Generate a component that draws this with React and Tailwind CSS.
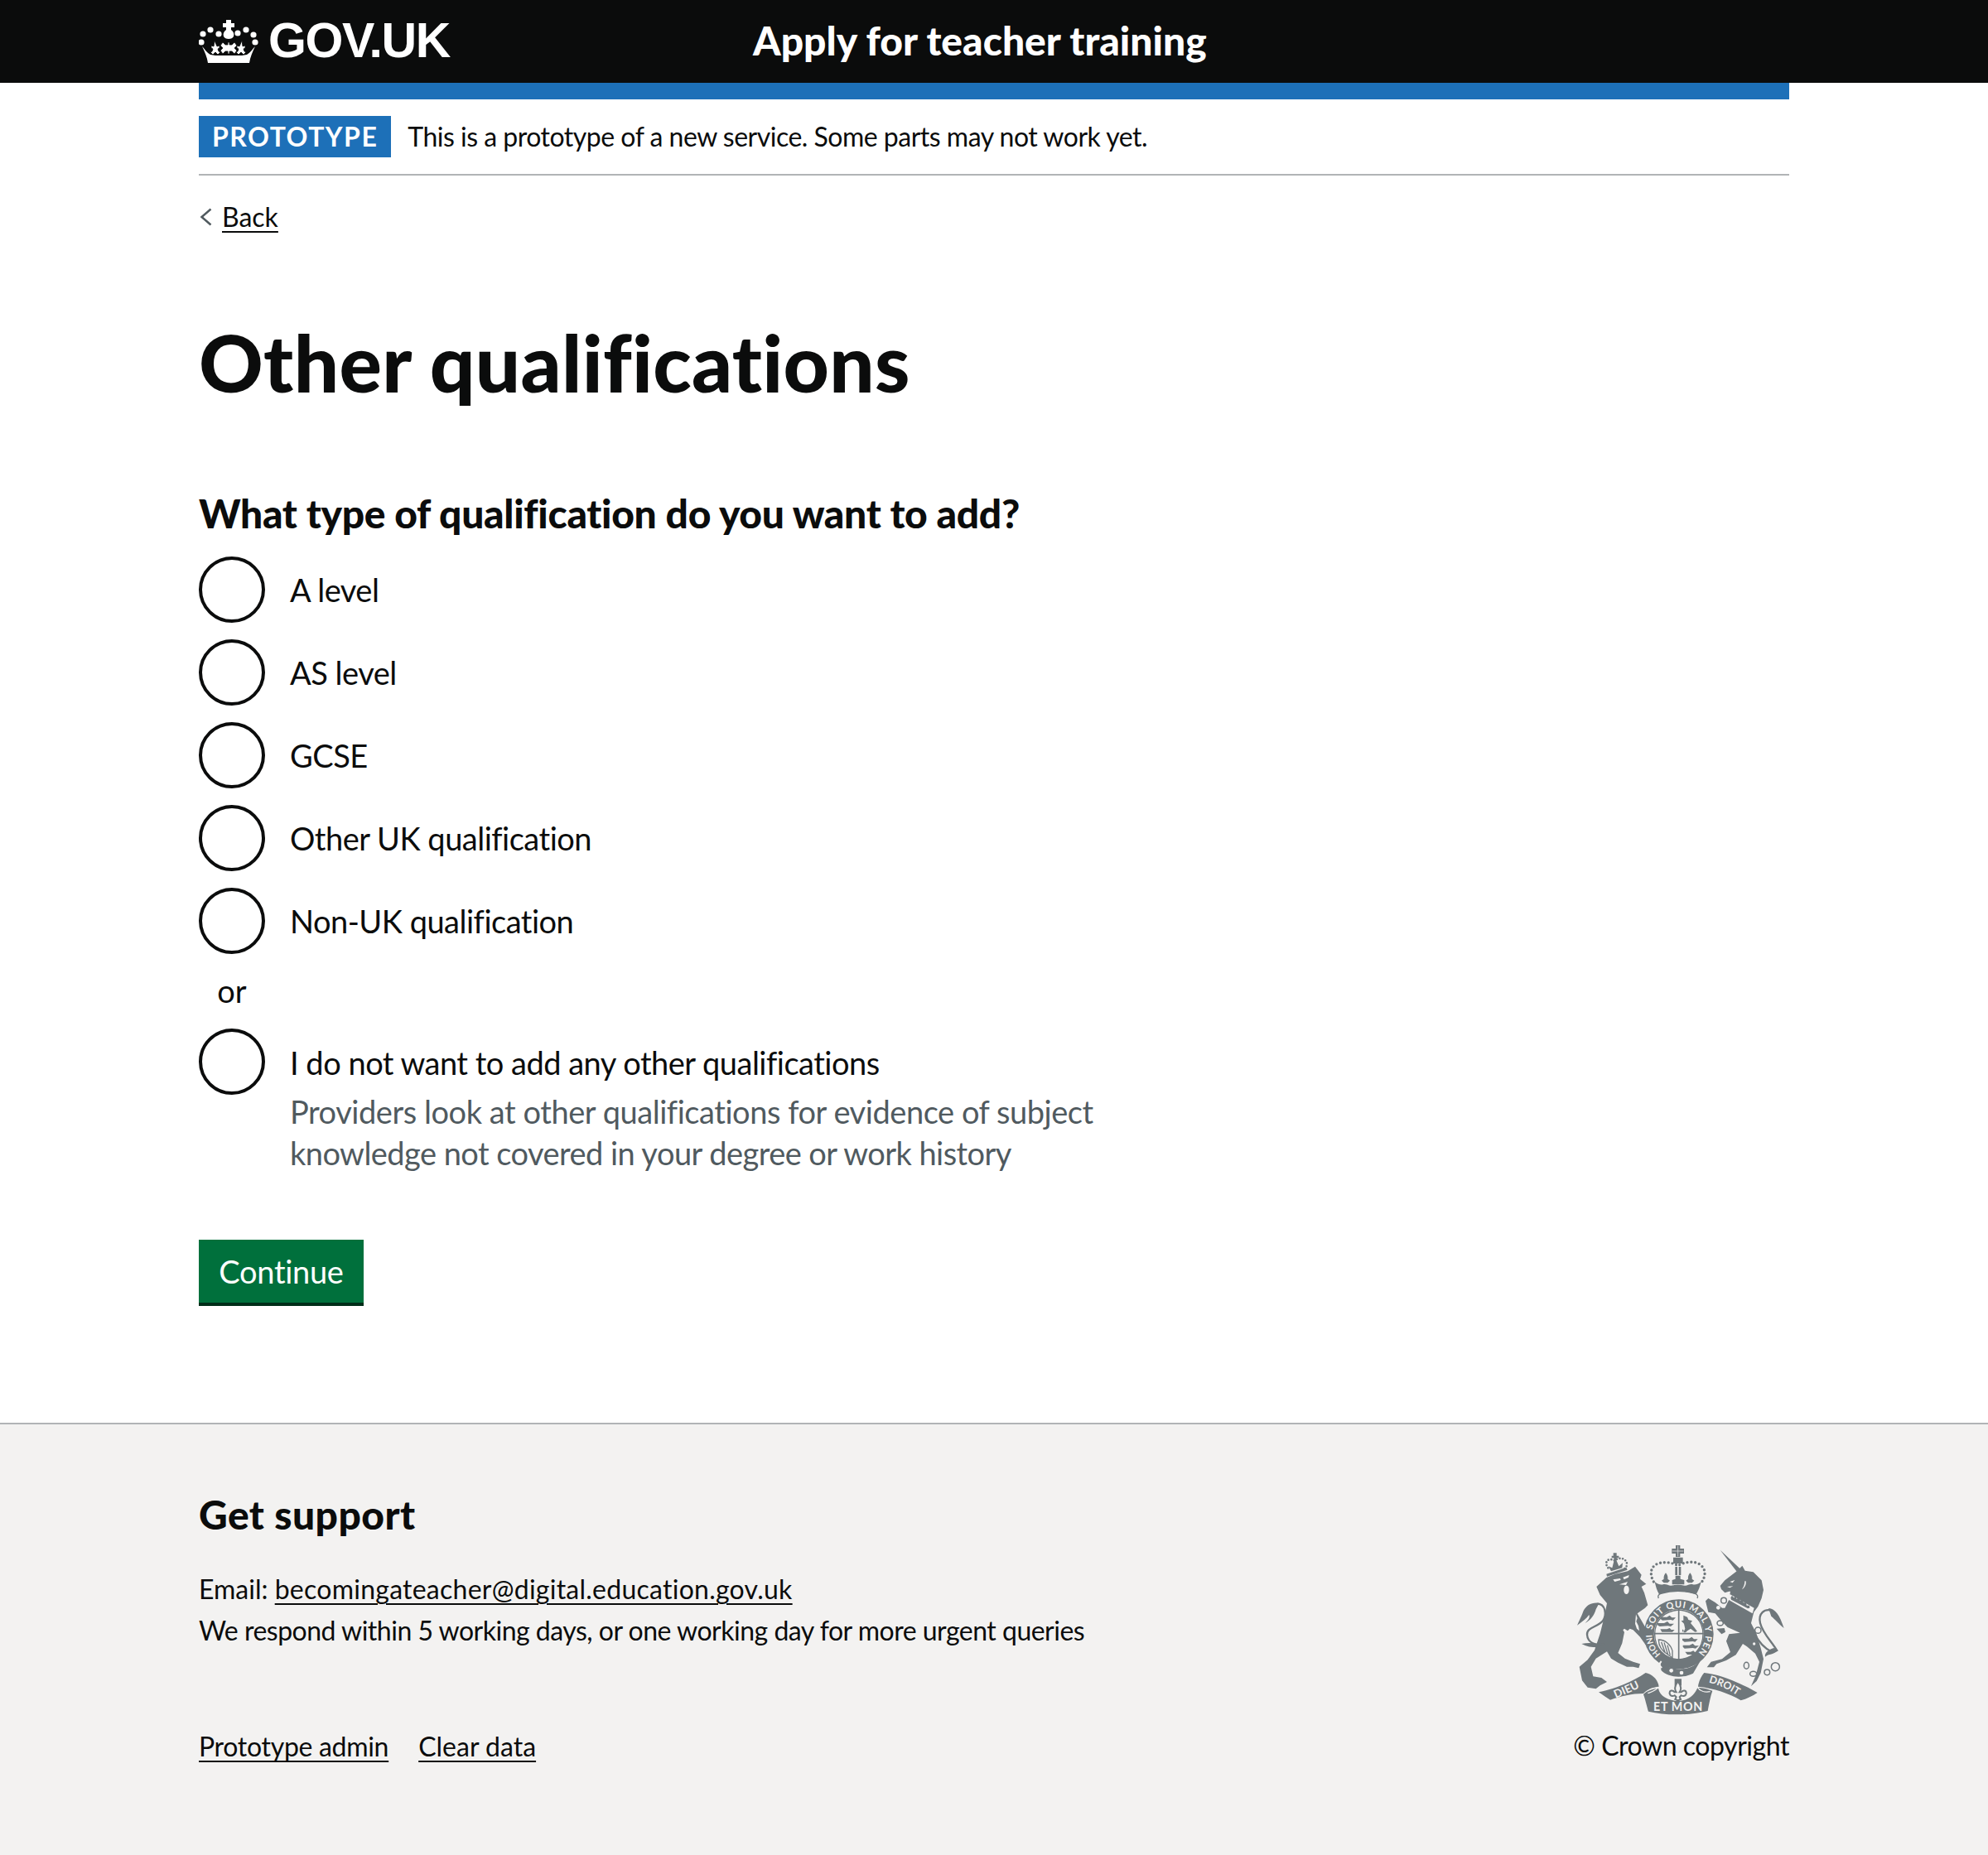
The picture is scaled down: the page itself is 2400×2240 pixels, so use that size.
const FONT = "font-['Lato',sans-serif] [font-variant-ligatures:none]"

const radios = ['A level', 'AS level', 'GCSE', 'Other UK qualification', 'Non-UK qualification']

const Crown = () => (
    <svg viewBox="0 0 72 52" className="w-[72px] h-[52px] fill-white">
        <path d="M33 0h6v4h4v5h-4v3c3 2 4 5 3 8-1 2-3 3-6 3s-5-1-6-3c-1-3 0-6 3-8V9h-4V4h4z" />
        <circle cx="24" cy="17" r="3.6" /><circle cx="47" cy="16" r="3.6" />
        <circle cx="14" cy="12" r="3.6" /><circle cx="57" cy="12" r="3.6" />
        <circle cx="5" cy="17" r="3.600" /><circle cx="66" cy="18" r="3.600" />
        <circle cx="3" cy="27" r="3.600" /><circle cx="68" cy="27" r="3.600" />
        <path d="M4 32c3 6 6 13 7 20h50c1-7 4-14 7-20-3 3-6 8-10 10-4 1-8 1-11 1H25c-3 0-7 0-11-1-4-2-7-7-10-10z" />
        <g stroke="#0b0c0c" strokeWidth=".8">
            <path d="M19 25l3 7 3-1v3l-2 1 1 3 2 1-3 3-3-3-3 3-3-3 2-1 1-3-2-1v-3l3 1z" />
            <path d="M52 25l-3 7-3-1v3l2 1-1 3-2 1 3 3 3-3 3 3 3-3-2-1-1-3 2-1v-3l-3 1z" />
            <path d="M32 30h3v-3h2v3h3l3-3 3 4-3 3 3 3-3 4-3-3h-3v3h-2v-3h-3l-3 3-3-4 3-3-3-3 3-4z" />
        </g>
    </svg>
)

const CREST = '#6f777b'
const BG = '#f3f2f1'

const Lion = () => (
    <g transform="translate(1900 1870) scale(.3333)">
        <path fill="none" stroke={CREST} strokeWidth="8" strokeLinecap="round" strokeDasharray="0 11" d="M124 70c-16-20 0-40 24-26 16-16 42-8 44 10 1 10-4 16-10 20" />
        <path fill={CREST} d="M143 16h12v10h8v8h-8v10l8 20 14-12-2 18-40 12-10-18 14 6 6-24V34h-8v-8h6z" />
        <path fill={CREST} d="M118 92l72-24 4 9-74 24z" />
        <path fill={CREST} d="M118 105l32-13 45-10 27-17 23 30-5 15 22 18-17 10 10 22 13 45-10 10-28 20 32 55 18 30 2 25-20 7-22-32-25-25-12-5-8 8-12-8-5 5 5 8-8 40-15 35 25 20 30 12 25 8-5 15-20-5-23 0-32-15-25-15-15-25-40 25-18 30 8 35 30 5 20 15-25 13-15 12-30-5-20-25-10-50 30-25 25-35 20-60 15-60 10-50-25-30-13-30z" />
        <path fill={BG} d="M142 112l26-4 2 6-22 6zM178 104l22-8-2 8-16 8zM165 130l30-10-6 12zM190 134c8 0 11 8 10 18-1 8-5 14-11 13-6-2-9-10-8-18 1-8 4-13 9-13z" />
        <path fill={BG} d="M225 238l5 14-4 12 8 16 3 18-9-8-6-18z" />
        <path fill="none" stroke={CREST} strokeWidth="7" d="M112 345C80 356 50 340 48 312 46 285 85 285 105 262 120 240 115 200 85 200" />
        <path fill={CREST} d="M92 197C65 193 45 205 35 225 28 245 20 260 12 278 30 265 45 255 55 240 60 250 50 262 40 270 60 262 75 240 80 220zM28 345c22-5 42-3 62 0l-5 13c-20 0-40-3-57-13z" />
    </g>
)

const Unicorn = () => (
    <g transform="translate(2045 1870) scale(.3333)">
        <path fill={CREST} d="M95 5l72 68-12 10z" />
        <path fill={CREST} d="M155 82l20-20 10 18 30 5 30 30 7 35-7 30-13 30-15 20-10 40 20 40 15 50 10 40-10 50-15 30-20 18 17-38 13-50-15-30-30-25-15-10-25 40-35 20-35 13-10 12-25 0 15-20 40-10 30-25-15-40 10-25 40-5-45-20-20-20-25-30-25-5-10-40 10-10 25 15 25 20 10 0 15-30 5-30-5 0-15 5-13-13-4-12 17-20z" />
        <path fill={CREST} d="M110 288l-28 2 18 20 14-8z" />
        <path fill={BG} d="M130 165l88 50-6 20-87-50z" />
        <path fill={CREST} d="M138 170l6 8 8-6 2 10 10-4 3 10 10-2 2 10 10 0 2 10 10 0 1 9-7 2-60-32-2-7z" />
        <path fill={BG} d="M130 120l18-6-8 10zM188 118c2 12-4 24-14 30 6-8 10-18 10-30zM120 138l22-2-12 6z" />
        <circle cx="200" cy="375" r="8" fill={BG} /><circle cx="218" cy="345" r="5" fill={BG} /><circle cx="88" cy="214" r="7" fill={BG} />
        <g fill="none" stroke={CREST} strokeWidth="4.500">
            <ellipse cx="190" cy="424" rx="9" ry="12" /><ellipse cx="215" cy="454" rx="12" ry="9" /><circle cx="265" cy="448" r="10" /><circle cx="295" cy="428" r="15" /><circle cx="108" cy="188" r="10" /><circle cx="232" cy="296" r="11" /><ellipse cx="95" cy="270" rx="11" ry="9" />
        </g>
        <path fill="none" stroke={CREST} strokeWidth="7" d="M302 372C285 340 250 310 240 270 232 235 255 215 285 225M218 305C235 340 262 365 285 376" />
        <path fill={CREST} d="M270 216c25 2 40 24 56 72-21-18-31-30-46-43zM305 368c-15 17-35 12-47 24-3-14 12-27 32-32z" />
    </g>
)

const Shield = () => (
    <g transform="translate(1975 1930) scale(.3333)">
        <circle cx="155" cy="130" r="108" fill="none" stroke={CREST} strokeWidth="36" />
        <path fill={CREST} d="M82 222c30 40 120 55 160-10l-35 60c-40 20-90 15-115-10z" />
        <circle cx="128" cy="262" r="7" fill={BG} /><circle cx="165" cy="270" r="7" fill={BG} />
        <path d="M92 228c-8 8-8 18 2 24" fill="none" stroke={BG} strokeWidth="6" />
        <defs>
            <path id="garterA" d="M59 115A97 97 0 1 1 217 205" />
            <path id="garterB" d="M90 202A97 97 0 0 1 58 136" />
        </defs>
        <text fill={BG} fontSize="33" fontWeight="700"><textPath href="#garterA" textLength="405">SOIT QUI MAL Y PENSE</textPath></text>
        <text fill={BG} fontSize="30" fontWeight="700"><textPath href="#garterB">HONI</textPath></text>
        <path d="M155 38v187M65 128h180" stroke={CREST} strokeWidth="5" />
        <path fill="none" stroke={CREST} strokeWidth="4" d="M68 130c0-50 34-84 87-88 52 4 88 38 88 88 0 50-34 88-88 92-54-4-87-42-87-92z" />
        <path fill={CREST} d="M90 68h22l10-6 8 8h14l-10 10-8-2-30 2-8-6zM78 90h24l12-6 8 8h16l-12 10-10-2-30 2-10-6zM88 112h24l10-4 6 6h12l-8 8H94z" />
        <path fill={CREST} d="M172 62l14 6 4 10 14 4-6 8 12 14 12 16-8 2-16-12-12 8-6 6h-8l6-14-4-18-10-10 8-2zM225 72l6 6-6 4zM168 112l6 6-6 4z" />
        <path fill={CREST} d="M168 146h24l10-6 8 8h14l-10 10-8-2-30 2-8-6zM170 170h24l12-6 8 8h14l-12 10-10-2-30 2-6-6zM178 194h20l10-4 6 6h10l-8 8h-30z" />
        <path fill="none" stroke={CREST} strokeWidth="4" d="M82 150c24 0 44 18 50 40v26l-16-12c-20-12-34-32-34-54zM92 158l14 40M102 160l14 44M114 170l10 36" />
    </g>
)

const RoyalCrown = () => (
    <g transform="translate(1985 1860) scale(.3333)">
        <path fill={CREST} d="M114 18h16v12h14v18h-14v12h-16V48h-14V30h14z" />
        <path d="M102 39h40M122 20v38" stroke={BG} strokeWidth="2" />
        <path fill={CREST} d="M105 62h35v22h-35zM112 96h8v30h-8zM125 96h8v30h-8z" />
        <path fill="none" stroke={CREST} strokeWidth="10" strokeLinecap="round" strokeDasharray="0 14.500" d="M34 150C20 125 22 100 42 88 62 76 100 78 122 92 145 78 185 72 205 90 225 108 222 130 208 152" />
        <path fill={CREST} d="M78 118c6 8 8 14 7 22l8 6-8 8-14 0-8-8 8-6c-1-8 1-14 7-22zM166 118c6 8 8 14 7 22l8 6-8 8-14 0-8-8 8-6c-1-8 1-14 7-22zM113 128h18v12l14 4v16h-44v-16l12-4z" />
        <path fill={CREST} d="M38 150c12 10 22 12 30 10 12-3 22 6 30 4 16-4 32-4 48 0 10 2 18-8 30-4 8 2 18 0 30-10-4 18-10 32-18 46-46-16-88-16-134 0-8-14-12-28-16-46z" />
        <path fill="none" stroke={CREST} strokeWidth="4" d="M52 210c-4-8 0-14 8-17 40-12 84-12 124 0 8 3 12 9 8 17" />
    </g>
)

const Motto = () => (
    <g transform="translate(1880 1840) scale(.3333)">
        <path fill={CREST} d="M150 610C200 600 270 575 320 540 345 545 365 565 368 590 345 592 325 600 312 615 270 615 230 625 192 638 178 630 165 620 150 610z" />
        <path fill={CREST} d="M312 618C320 640 325 665 330 680 390 695 480 695 545 678 550 650 555 625 562 605 545 600 530 592 508 594 500 615 480 640 440 642 400 640 372 625 366 596 345 598 325 604 312 618z" />
        <path fill={CREST} d="M510 590C512 570 522 552 532 540 590 545 670 580 725 612 710 622 685 635 665 640 625 615 565 595 510 590z" />
        <path d="M366 592c-8 12-22 16-38 22M508 592c8 14 26 20 46 16" fill="none" stroke={BG} strokeWidth="4" />
        <defs>
            <path id="ribLeft" d="M212 632C245 618 280 604 315 585" />
            <path id="ribRight" d="M548 575C590 585 630 605 666 632" />
        </defs>
        <text fill={BG} fontSize="40" fontWeight="700"><textPath href="#ribLeft">DIEU</textPath></text>
        <text fill={BG} fontSize="37" fontWeight="700"><textPath href="#ribRight">DROIT</textPath></text>
        <text x="348" y="678" fill={BG} fontSize="43" fontWeight="700" textLength="178">ET MON</text>
        <path fill={CREST} d="M425 562h25v24h-25z" />
        <path fill={BG} stroke={CREST} strokeWidth="6" d="M437 572c12 14 14 26 6 38h6c8-10 20-6 18 6-2 8-10 10-18 6l-6 6 4 8-10 4-10-4 4-8-6-6c-8 4-16 2-18-6-2-12 10-16 18-6h6c-8-12-6-24 6-38z" />
    </g>
)

const Crest = () => (
    <svg viewBox="1900 1860 260 215" className="w-[260px] h-[215px]" style={{ fontFamily: 'Lato, sans-serif' }}>
        <Lion />
        <Unicorn />
        <RoyalCrown />
        <Shield />
        <Motto />
    </svg>
)

const App = () => {
    return (
        <div className={`${FONT} w-[2400px] min-h-[2240px] bg-white text-[#0b0c0c] flex flex-col`}>
            <header className="h-[100px] bg-[#0b0c0c] text-white">
                <div className="w-[1920px] mx-auto h-full flex items-center">
                    <div className="flex items-center w-[669px] h-full">
                        <Crown />
                        <span className="ml-3 font-bold text-[59px] leading-none font-['Liberation_Sans',sans-serif] tracking-[-1.4px] -mt-0.5">GOV.UK</span>
                    </div>
                    <span className="text-[48px] font-black leading-none -mt-0.5">Apply for teacher training</span>
                </div>
            </header>
            <main className="w-[1920px] mx-auto flex-1">
                <div className="h-5 bg-[#1d70b8]"></div>
                <div className="pt-5 pb-5 border-b-2 border-[#b1b4b6] flex items-center h-[92px]">
                    <span className="bg-[#1d70b8] text-white font-bold text-[32px] leading-[50px] h-[50px] px-4 tracking-[1.5px]">PROTOTYPE</span>
                    <span className="ml-5 text-[32px] leading-none tracking-[-0.5px]">This is a prototype of a new service. Some parts may not work yet.</span>
                </div>
                <div className="mt-[28px] flex items-center h-[44px]">
                    <svg viewBox="0 0 16 22" className="w-4 h-[22px] mr-3"><path d="M14.500 1.500 3.500 11l11 9.500" fill="none" stroke="#505a5f" strokeWidth="2.500" /></svg>
                    <a className="text-[32px] leading-none underline decoration-2 underline-offset-[5px]">Back</a>
                </div>
                <h1 className="mt-[103px] text-[96px] leading-[100px] font-black tracking-[0.3px]">Other qualifications</h1>
                <h2 className="mt-[103px] text-[48px] leading-[60px] font-black tracking-[-0.33px]">What type of qualification do you want to add?</h2>
                <div className="mt-[22px] flex flex-col gap-5">
                    {radios.map((label) => (
                        <div key={label} className="flex items-center h-20">
                            <div className="w-20 h-20 rounded-full border-4 border-[#0b0c0c] shrink-0"></div>
                            <span className="ml-[30px] text-[38px] leading-none tracking-[-0.5px]">{label}</span>
                        </div>
                    ))}
                </div>
                <div className="w-20 h-[90px] text-center text-[38px] leading-[88px]">or</div>
                <div className="flex">
                    <div className="w-20 h-20 rounded-full border-4 border-[#0b0c0c] shrink-0"></div>
                    <div className="ml-[30px]">
                        <div className="h-[75px] pt-1.5 flex items-center text-[38px] leading-none tracking-[-0.5px]">I do not want to add any other qualifications</div>
                        <div className="text-[38px] leading-[50px] text-[#505a5f] tracking-[-0.45px]">Providers look at other qualifications for evidence of subject<br /><span className="tracking-[-0.55px]">knowledge not covered in your degree or work history</span></div>
                    </div>
                </div>
                <button className="mt-[80px] block h-20 w-[199px] bg-[#00703c] text-white text-[38px] leading-none border-b-4 border-[#002d18] tracking-[-0.3px]">Continue</button>
            </main>
            <footer className="h-[522px] bg-[#f3f2f1] border-t-2 border-[#b1b4b6]">
                <div className="w-[1920px] mx-auto h-full flex justify-between">
                    <div>
                        <h2 className="mt-[79px] text-[48px] leading-[60px] font-black tracking-[0.45px]">Get support</h2>
                        <p className="mt-[35px] text-[32px] leading-[50px]">Email: <a className="underline decoration-2 underline-offset-[5px] tracking-[0.25px]">becomingateacher@digital.education.gov.uk</a><br /><span className="tracking-[-0.5px]">We respond within 5 working days, or one working day for more urgent queries</span></p>
                        <div className="mt-[90px] flex gap-9 text-[32px] leading-[50px]">
                            <a className="underline decoration-2 underline-offset-[5px] tracking-[-0.3px]">Prototype admin</a>
                            <a className="underline decoration-2 underline-offset-[5px]">Clear data</a>
                        </div>
                    </div>
                    <div className="flex flex-col items-end pt-[140px]">
                        <Crest />
                        <span className="mt-2 text-[32px] leading-[50px] tracking-[-0.45px]">© Crown copyright</span>
                    </div>
                </div>
            </footer>
        </div>
    )
}

export default App
